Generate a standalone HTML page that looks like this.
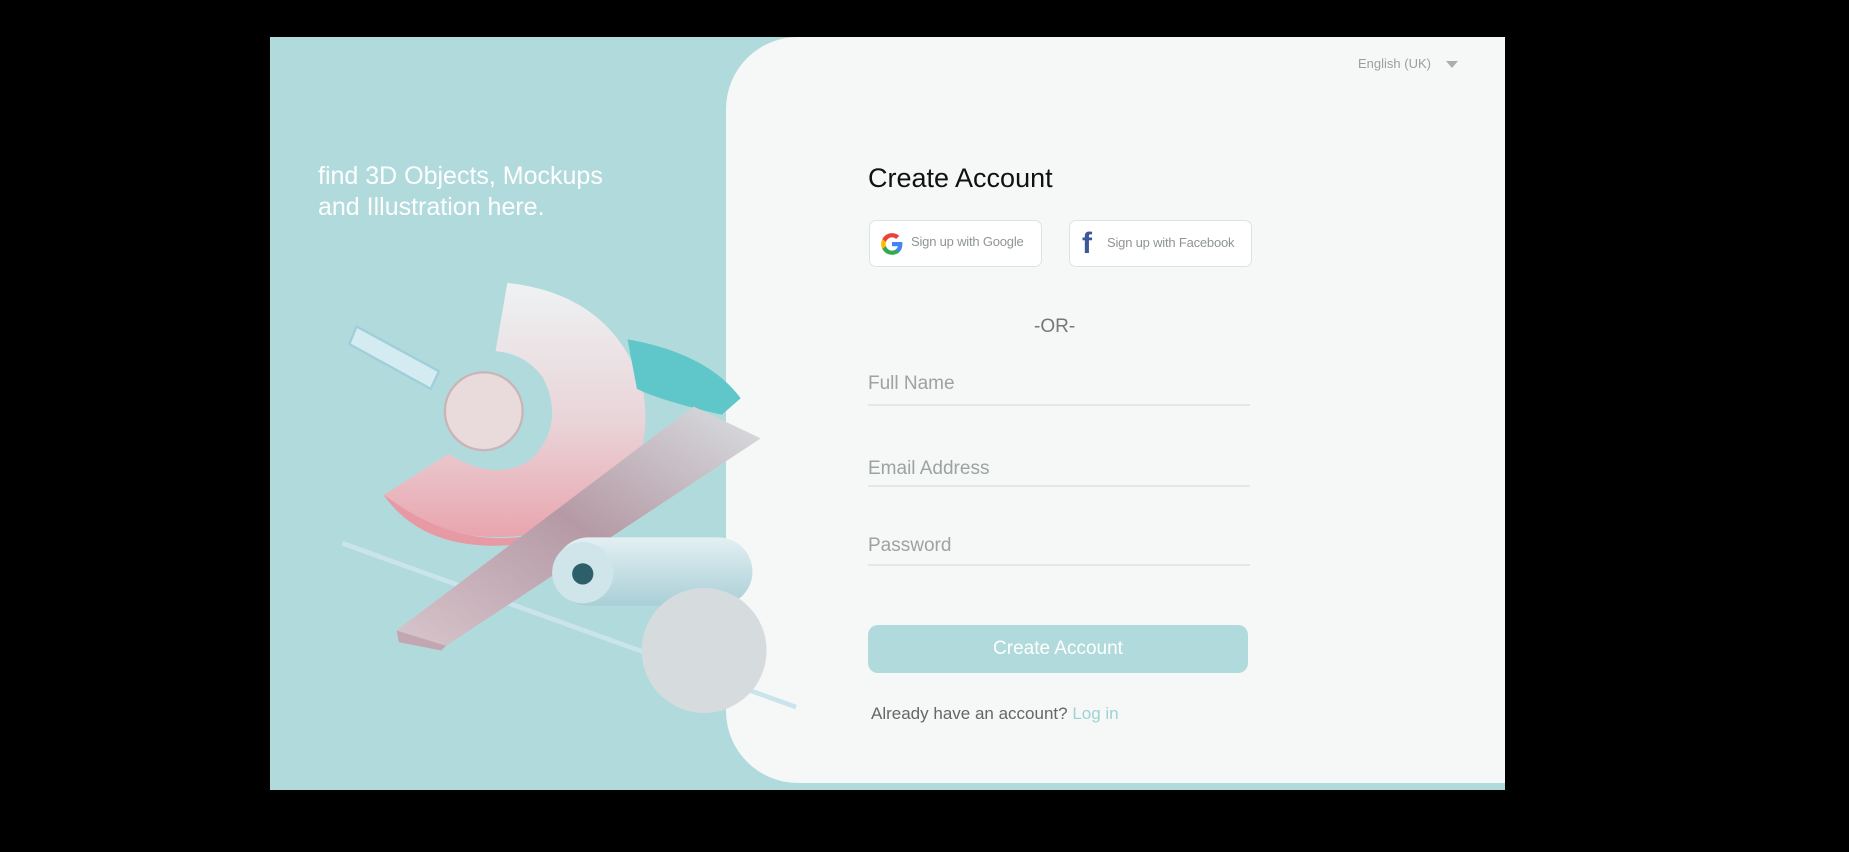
<!DOCTYPE html>
<html><head><meta charset="utf-8"><style>
*{margin:0;padding:0;box-sizing:border-box}
body{width:1849px;height:852px;background:#000;position:relative;overflow:hidden;font-family:"Liberation Sans",sans-serif}
.card{position:absolute;left:270px;top:37px;width:1235px;height:753px;background:#b1dadc}
.panel{position:absolute;left:726px;top:37px;width:779px;height:746px;background:#f6f7f7;border-radius:72px 0 0 72px}
.t{position:absolute;white-space:nowrap}
.line{position:absolute;left:868px;width:382px;height:2px;background:#e4e7e7}
.btn{position:absolute;top:220px;height:47px;background:#fff;border:1px solid #dfe2e2;border-radius:7px}
</style></head><body>
<div class="card"></div>
<div class="panel"></div>
<svg style="position:absolute;left:0;top:0" width="1849" height="852" viewBox="0 0 1568 723">
<defs>
<linearGradient id="ring" x1="0" y1="0" x2="0" y2="1"><stop offset="0" stop-color="#eef2f3"/><stop offset=".55" stop-color="#e9d4d8"/><stop offset="1" stop-color="#e9a5ae"/></linearGradient>
<linearGradient id="slab" x1="0" y1="1" x2="1" y2="0"><stop offset="0" stop-color="#d8c5cc"/><stop offset=".5" stop-color="#b59aa5"/><stop offset="1" stop-color="#d9dfe2"/></linearGradient>
<linearGradient id="cyl" x1="0" y1="0" x2="0" y2="1"><stop offset="0" stop-color="#e3f0f3"/><stop offset="1" stop-color="#a9cfd6"/></linearGradient>
</defs>
<line x1="290" y1="461" x2="675" y2="600" stroke="#c9e4ea" stroke-width="4"/>
<path d="M430 240 Q520 250 545 330 Q560 420 470 450 Q380 470 325 420 L380 385 Q420 410 450 390 Q480 360 460 320 Q445 300 420 298 Z" fill="url(#ring)"/>
<path d="M325 420 Q360 470 440 462 L470 450 Q400 470 340 430Z" fill="#e79aa4"/>
<path d="M532 288 Q600 300 628 338 L612 352 Q560 340 540 330 Z" fill="#5fc6c9"/>
<circle cx="410" cy="349" r="33" fill="#e9dadc" stroke="#c9b5b8" stroke-width="2"/>
<path d="M302 277 L372 315 L365 330 L296 292 Z" fill="#d4ecf1" stroke="#9fcfd9" stroke-width="2"/>
<path d="M336 535 L588 345 L645 372 L378 548 Z" fill="url(#slab)"/>
<path d="M336 535 L378 548 L374 552 L338 545 Z" fill="#c2a7b0"/>
<rect x="470" y="456" width="168" height="58" rx="29" fill="url(#cyl)"/>
<circle cx="494" cy="486" r="26" fill="#cfe5ea"/>
<circle cx="494" cy="487" r="9" fill="#2c5f6a"/>
<circle cx="597" cy="552" r="53" fill="#d6dcdd"/>
</svg>
<div class="t" style="left:318px;top:161px;color:#fff;font-size:25px;line-height:31px">find 3D Objects, Mockups<br>and Illustration here.</div>
<div class="t" style="left:1358px;top:56px;color:#9a9fa0;font-size:13px">English (UK)</div>
<div class="t" style="left:1446px;top:61px;width:0;height:0;border-left:6px solid transparent;border-right:6px solid transparent;border-top:7px solid #a9aeaf"></div>
<div class="t" style="left:868px;top:163px;color:#111;font-size:27px">Create Account</div>
<div class="btn" style="left:869px;width:173px"></div>
<svg class="t" style="left:879px;top:231px" width="26" height="26" viewBox="0 0 24 24"><path d="M21.6 12.2c0-.7-.1-1.4-.2-2H12v3.9h5.4a4.6 4.6 0 0 1-2 3v2.5h3.2c1.9-1.7 3-4.3 3-7.4z" fill="#4285F4"/><path d="M12 22c2.7 0 5-.9 6.6-2.4l-3.2-2.5c-.9.6-2 1-3.4 1-2.6 0-4.8-1.8-5.6-4.1H3.1v2.6A10 10 0 0 0 12 22z" fill="#34A853"/><path d="M6.4 14c-.2-.6-.3-1.3-.3-2s.1-1.4.3-2V7.4H3.1a10 10 0 0 0 0 9.2z" fill="#FBBC05"/><path d="M12 5.9c1.5 0 2.8.5 3.8 1.5l2.9-2.9A10 10 0 0 0 3.1 7.4L6.4 10c.8-2.4 3-4.1 5.6-4.1z" fill="#EA4335"/></svg>
<div class="t" style="left:911px;top:234px;color:#8f9496;font-size:13px;letter-spacing:-0.2px">Sign up with Google</div>
<div class="btn" style="left:1069px;width:183px"></div>
<div class="t" style="left:1082px;top:227px;color:#3b5998;font-size:30px;font-weight:bold">f</div>
<div class="t" style="left:1107px;top:235px;color:#8f9496;font-size:13px;letter-spacing:-0.2px">Sign up with Facebook</div>
<div class="t" style="left:1034px;top:316px;color:#777;font-size:19px">-OR-</div>
<div class="t" style="left:868px;top:373px;color:#9da2a3;font-size:19px">Full Name</div>
<div class="line" style="top:404px"></div>
<div class="t" style="left:868px;top:458px;color:#9da2a3;font-size:19px">Email Address</div>
<div class="line" style="top:485px"></div>
<div class="t" style="left:868px;top:535px;color:#9da2a3;font-size:19px">Password</div>
<div class="line" style="top:564px"></div>
<div class="t" style="left:868px;top:625px;width:380px;height:48px;background:#b1dadc;border-radius:10px;color:#fff;font-size:19px;text-align:center;line-height:48px">Create Account</div>
<div class="t" style="left:871px;top:704px;color:#666;font-size:17px">Already have an account? <span style="color:#9fd2d6">Log in</span></div>
</body></html>
